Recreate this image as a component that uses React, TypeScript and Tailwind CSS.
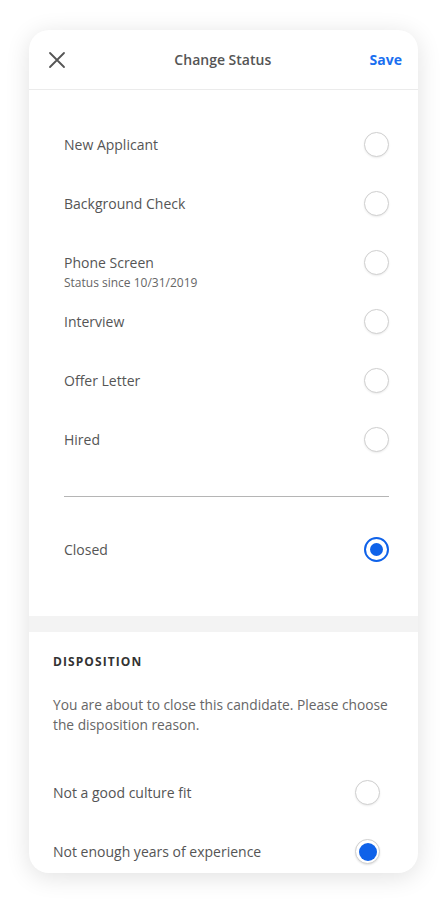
import React from 'react'

const STATUSES = [
  { label: 'New Applicant' },
  { label: 'Background Check' },
  { label: 'Phone Screen', since: 'Status since 10/31/2019' },
  { label: 'Interview' },
  { label: 'Offer Letter' },
  { label: 'Hired' },
]

function Radio({ variant = 'off' }: { variant?: 'off' | 'ring' | 'dot' }) {
  if (variant === 'ring') {
    return (
      <div className="w-[25px] h-[25px] rounded-full border-[2.5px] border-[#0f62e9] flex items-center justify-center shrink-0">
        <div className="w-[13px] h-[13px] rounded-full bg-[#0f62e9]" />
      </div>
    )
  }
  if (variant === 'dot') {
    return (
      <div className="w-[25px] h-[25px] rounded-full border-[1.5px] border-[#cfcfcf] bg-white flex items-center justify-center shrink-0 shadow-[0_1px_2px_rgba(0,0,0,0.12)]">
        <div className="w-[18px] h-[18px] rounded-full bg-[#0f62e9]" />
      </div>
    )
  }
  return (
    <div className="w-[25px] h-[25px] rounded-full border-[1.5px] border-[#cfcfcf] bg-white shrink-0 shadow-[0_1px_2px_rgba(0,0,0,0.08)]" />
  )
}

function StatusRow({ label, since, variant }: { label: string; since?: string; variant?: 'off' | 'ring' | 'dot' }) {
  return (
    <div className="h-[59px] pt-[17px] flex items-start justify-between">
      <div>
        <div className="text-[14px] leading-[25px] text-[#555]">{label}</div>
        {since && <div className="text-[12px] leading-[16px] text-[#666]">{since}</div>}
      </div>
      <Radio variant={variant} />
    </div>
  )
}

export default function App() {
  return (
    <div className="w-[448px] h-[902px] bg-white pt-[30px] pl-[29px] pr-[30px] font-['Open_Sans',sans-serif]">
      <div className="h-[843px] rounded-[20px] bg-white overflow-hidden shadow-[0_4px_24px_rgba(0,0,0,0.12)] flex flex-col">
        {/* Header */}
        <div className="h-[60px] shrink-0 flex items-center justify-between pl-[19px] pr-[16px] border-b border-[#ebebeb]">
          <svg width="18" height="18" viewBox="0 0 18 18" fill="none" stroke="#555" strokeWidth="1.8" strokeLinecap="round">
            <path d="M2 2L16 16M16 2L2 16" />
          </svg>
          <span className="text-[14px] font-semibold text-[#555] ml-[10px]">Change Status</span>
          <span className="text-[14px] font-bold text-[#1a6ff0]">Save</span>
        </div>

        {/* Statuses */}
        <div className="shrink-0 pt-[25px] pl-[35px] pr-[29px] pb-[37px]">
          {STATUSES.map((s) => (
            <StatusRow key={s.label} label={s.label} since={s.since} />
          ))}
          <div className="mt-[27px] mb-[23px] h-px bg-[#b5b5b5]" />
          <StatusRow label="Closed" variant="ring" />
        </div>

        <div className="h-[16px] shrink-0 bg-[#f3f3f3]" />

        {/* Disposition */}
        <div className="pt-[21px] pl-[24px] pr-[29px]">
          <div className="text-[12px] leading-[18px] font-bold tracking-[0.09em] text-[#333]">DISPOSITION</div>
          <p className="mt-[24px] text-[13.75px] leading-[20px] text-[#666]">
            You are about to close this candidate. Please choose the disposition reason.
          </p>
          <div className="mt-[28px] pr-[9px]">
            <StatusRow label="Not a good culture fit" />
            <StatusRow label="Not enough years of experience" variant="dot" />
          </div>
        </div>
      </div>
    </div>
  )
}
